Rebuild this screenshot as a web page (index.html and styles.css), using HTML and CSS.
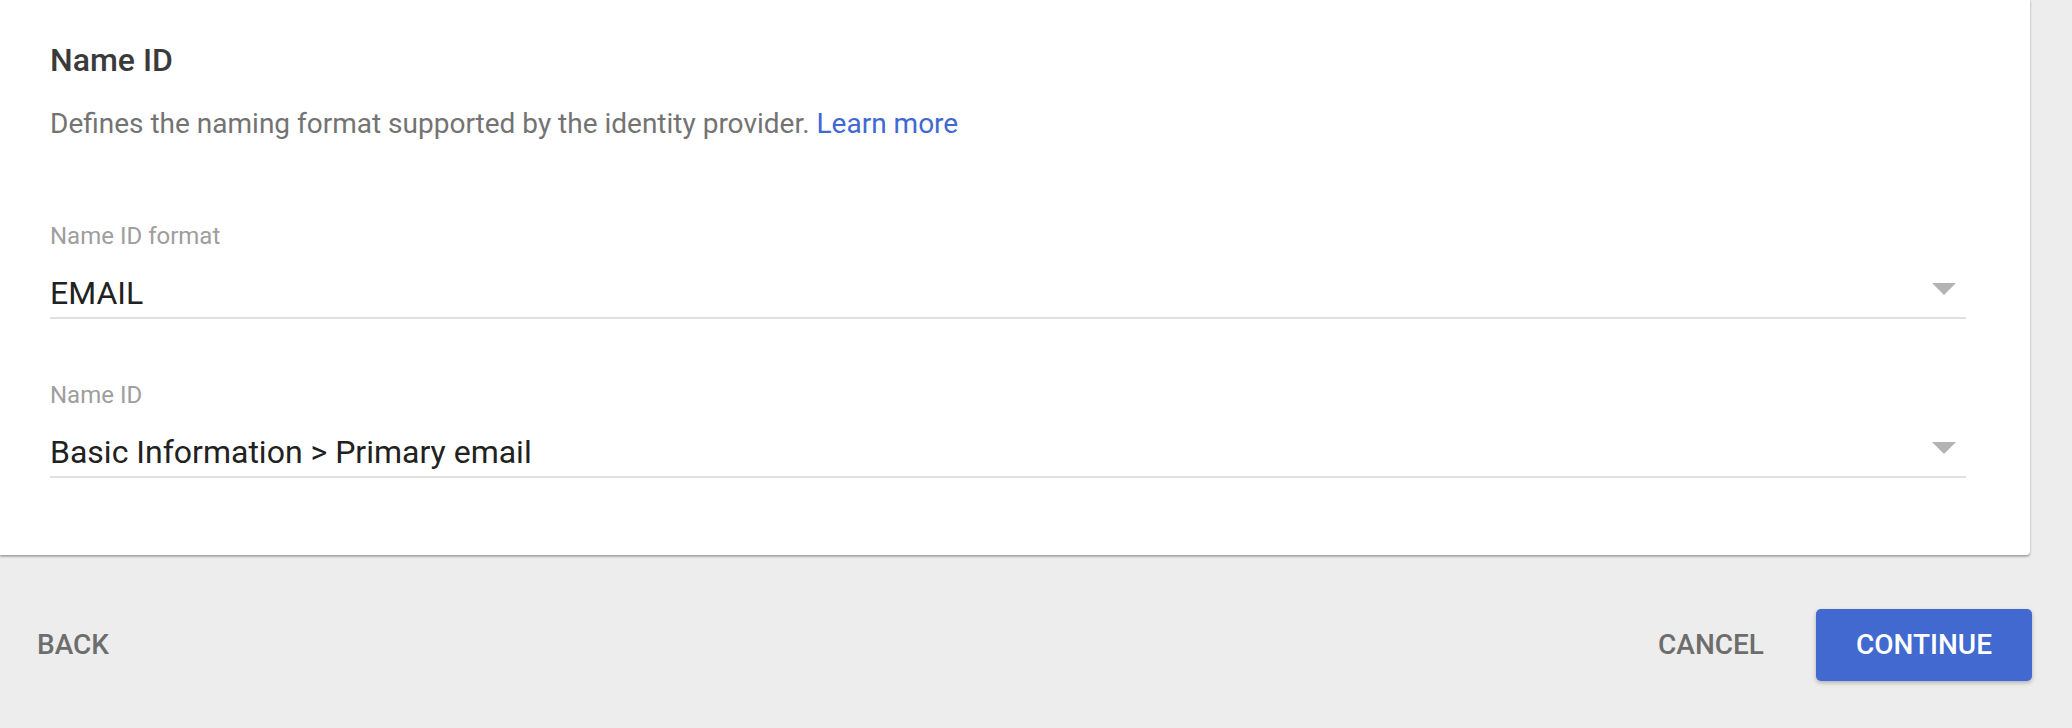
FILE: index.html
```html
<!DOCTYPE html>
<html lang="en">
<head>
<meta charset="utf-8">
<title>Name ID</title>
<link rel="stylesheet" href="styles.css">
</head>
<body>
<div class="page">
  <section class="card">
    <h2 class="title">Name ID</h2>
    <p class="desc">Defines the naming format supported by the identity provider. <a class="link" href="#">Learn more</a></p>

    <div class="field first">
      <div class="label">Name ID format</div>
      <div class="control">
        <span class="value">EMAIL</span>
        <span class="arrow"></span>
      </div>
    </div>

    <div class="field">
      <div class="label">Name ID</div>
      <div class="control">
        <span class="value">Basic Information &gt; Primary email</span>
        <span class="arrow"></span>
      </div>
    </div>
  </section>

  <footer class="actions">
    <button class="btn flat">BACK</button>
    <div class="right">
      <button class="btn flat">CANCEL</button>
      <button class="btn primary">CONTINUE</button>
    </div>
  </footer>
</div>
</body>
</html>
```

FILE: styles.css
```css
* { box-sizing: border-box; }

html, body {
  margin: 0;
  padding: 0;
  background: #ededed;
  font-family: Roboto, "Noto Sans", "Liberation Sans", sans-serif;
}

.page {
  width: 2072px;
  height: 728px;
  overflow: hidden;
}

.card {
  width: 2030px;
  background: #ffffff;
  padding: 40px 64px 77px 50px;
  border-bottom-right-radius: 4px;
  box-shadow: 0 2px 2px rgba(0, 0, 0, 0.26), 0 0 3px rgba(0, 0, 0, 0.14);
}

.title {
  margin: 0;
  font-size: 32px;
  line-height: 40px;
  font-weight: 500;
  color: #3a3a3a;
}

.desc {
  margin: 26px 0 0;
  font-size: 28px;
  line-height: 36px;
  color: #737373;
}

.link {
  color: #3f68d4;
  text-decoration: none;
}

.field {
  margin-top: 60px;
}

.field.first {
  margin-top: 78px;
}

.label {
  font-size: 24px;
  line-height: 32px;
  color: #9e9e9e;
}

.control {
  margin-top: 21px;
  display: flex;
  justify-content: space-between;
  align-items: flex-start;
  padding-bottom: 4px;
  border-bottom: 2px solid #e0e0e0;
}

.value {
  font-size: 32px;
  line-height: 40px;
  color: #212121;
}

.arrow {
  margin: 10px 10px 0 0;
  width: 0;
  height: 0;
  border-left: 12px solid transparent;
  border-right: 12px solid transparent;
  border-top: 12px solid #b3b3b3;
}

.actions {
  margin-top: 54px;
  height: 72px;
  display: flex;
  align-items: center;
  justify-content: space-between;
  padding: 0 40px 0 37px;
}

.right {
  display: flex;
  align-items: center;
  gap: 52px;
}

.btn {
  font-family: Roboto, "Noto Sans", "Liberation Sans", sans-serif;
  font-size: 28px;
  font-weight: 500;
  line-height: 32px;
  border: none;
  background: none;
  padding: 0;
  cursor: pointer;
}

.btn.flat {
  color: #6d6d6d;
}

.btn.primary {
  width: 216px;
  height: 72px;
  background: #4169d0;
  color: #ffffff;
  border-radius: 5px;
  box-shadow: 0 2px 4px rgba(0, 0, 0, 0.25);
}
```
